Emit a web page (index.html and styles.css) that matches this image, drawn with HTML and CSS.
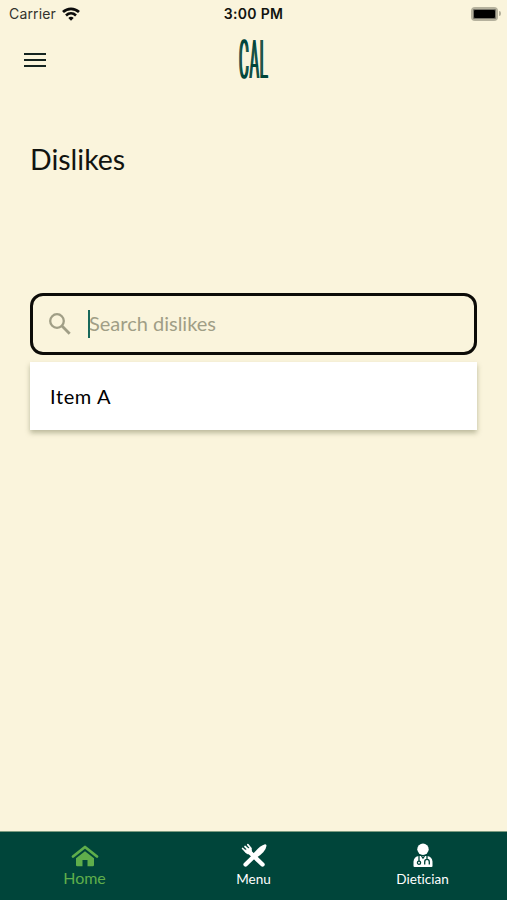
FILE: index.html
```html
<!DOCTYPE html>
<html lang="en">
<head>
    <meta charset="UTF-8">
    <meta name="viewport" content="width=device-width, initial-scale=1.0">
    <title>Dislikes</title>
    <link rel="stylesheet" href="styles.css">
</head>
<body>
    <div class="screen">
        <div class="status-bar">
            <div class="carrier">
                <span>Carrier</span>
                <svg class="wifi" viewBox="0 0 18 14" fill="none" stroke="#0c0c0c" stroke-width="2.7">
                    <path d="M1 5.1C5.5.8 12.5.8 17 5.1"/>
                    <path d="M4 8.4c2.9-2.6 7.1-2.6 10 0"/>
                    <path d="M9 13.7 6.3 10.9c1.5-1.4 3.9-1.4 5.4 0z" fill="#0c0c0c" stroke="none"/>
                </svg>
            </div>
            <span class="time">3:00 PM</span>
            <div class="battery">
                <span class="battery-body"></span>
                <span class="battery-tip"></span>
            </div>
        </div>

        <header class="header">
            <button class="menu-btn" aria-label="Open menu">
                <span></span>
                <span></span>
                <span></span>
            </button>
            <div class="logo"><span>CAL</span></div>
        </header>

        <main class="content">
            <h1>Dislikes</h1>

            <div class="search">
                <svg class="search-icon" viewBox="0 0 22 22" fill="none" stroke="#a09e86">
                    <circle cx="8" cy="8" r="6.8" stroke-width="2.3"/>
                    <path d="M13 13l7.7 7.7" stroke-width="2.8"/>
                </svg>
                <span class="caret"></span>
                <span class="placeholder">Search dislikes</span>
            </div>

            <ul class="results">
                <li>Item A</li>
            </ul>
        </main>

        <nav class="tab-bar">
            <a class="tab active">
                <svg width="28" height="22" viewBox="0 0 28 22">
                    <path d="M2 11.5 14 2l12 9.5" fill="none" stroke="#5fae4b" stroke-width="2.8" stroke-linecap="round" stroke-linejoin="round"/>
                    <path d="M14 6.2 23 13.3V20q0 1.2-1.2 1.2H16.5V15h-5v6.2H6.2Q5 21.2 5 20v-6.7z" fill="#5fae4b"/>
                </svg>
                <span>Home</span>
            </a>
            <a class="tab">
                <svg width="26" height="25" viewBox="0 0 26 25" fill="none" stroke="#fff" stroke-linecap="round">
                    <path d="M8.5 9 21.5 21.5" stroke-width="4.4"/>
                    <path d="M1.6 5.5 5.3 9.2M4 3.5 7.3 6.5M6.8 1.6 9.8 5.3" stroke-width="1.7"/>
                    <path d="M3.8 8Q5.5 12 9 10.8 11.5 8.5 9.8 4.8L7.7 5.8z" fill="#fff" stroke-width="1"/>
                    <path d="M11.5 11.5Q19 2.3 24 1.2q1.5-.2 1.5 1.6Q24.5 9.5 15 15z" fill="#fff" stroke="none"/>
                    <path d="M4.6 21.5 12.8 13.5" stroke-width="4.4"/>
                </svg>
                <span>Menu</span>
            </a>
            <a class="tab">
                <svg width="20" height="25" viewBox="0 0 20 25">
                    <circle cx="10" cy="6.2" r="5.7" fill="#fff"/>
                    <path d="M.5 23v-4.2Q.8 13.6 6 13h8q5.2.6 5.5 5.8V23q0 1-1 1h-17q-1 0-1-1z" fill="#fff"/>
                    <path d="M6 13v5.5M14 13v3M11.7 21.5v-2.6q0-2.5 2.3-2.5t2.3 2.5v2.6M8.5 13 10 15.2 11.5 13" fill="none" stroke="#00453a" stroke-width="1.3"/>
                    <circle cx="6" cy="19.7" r="1.6" fill="#fff" stroke="#00453a" stroke-width="1.3"/>
                </svg>
                <span>Dietician</span>
            </a>
        </nav>
    </div>
</body>
</html>
```
FILE: styles.css
```css
* {
    box-sizing: border-box;
    margin: 0;
    padding: 0;
}

body {
    background-color: #faf4dc;
    color: #11130f;
    font-family: 'Gill Sans', Lato, sans-serif;
    font-variant-ligatures: none;
}

.screen {
    display: flex;
    flex-direction: column;
    height: 900px;
    overflow: hidden;
}

.status-bar {
    display: grid;
    grid-template-columns: 1fr auto 1fr;
    align-items: center;
    height: 27px;
    padding: 0 6px 0 9px;
    font-family: Inter, sans-serif;
    font-size: 14px;
}

.carrier {
    display: flex;
    align-items: center;
    gap: 6px;
    color: #33322d;
    letter-spacing: 0.15px;
}

.wifi {
    width: 18px;
    height: 14px;
}

.time {
    margin-left: -3px;
    font-weight: 600;
    font-size: 14px;
    letter-spacing: 0.3px;
}

.battery {
    display: flex;
    align-items: center;
    justify-content: flex-end;
    gap: 1px;
}

.battery-body {
    width: 27px;
    height: 14px;
    background-color: #000;
    border: 2px solid #b5b19d;
    border-radius: 4px;
    box-shadow: inset 0 0 0 1px #77756a;
}

.battery-tip {
    width: 2px;
    height: 5px;
    background-color: #b5b19d;
    border-radius: 0 2px 2px 0;
}

.header {
    display: grid;
    grid-template-columns: 1fr auto 1fr;
    align-items: center;
    height: 66px;
    padding: 0 24px;
}

.menu-btn {
    display: flex;
    flex-direction: column;
    gap: 4px;
    width: 22px;
    background: none;
    border: none;
}

.menu-btn span {
    height: 2px;
    background-color: #14231f;
}

.logo {
    display: flex;
    justify-content: center;
    width: 30px;
    color: #00453a;
    font-family: Roboto, sans-serif;
    font-size: 54px;
    font-weight: 300;
    line-height: 66px;
}

.logo span {
    transform: scaleX(0.27);
    letter-spacing: 4px;
    text-shadow: 2px 0 currentColor, 4px 0 currentColor, -2px 0 currentColor;
}

.content {
    flex: 1;
    padding: 0 30px;
}

h1 {
    margin-top: 48px;
    font-size: 28.5px;
    font-weight: 400;
    line-height: 36px;
}

.search {
    display: flex;
    align-items: center;
    height: 62px;
    margin-top: 116px;
    padding: 0 15px;
    border: 3px solid #0c0b08;
    border-radius: 13px;
}

.search-icon {
    width: 22px;
    height: 22px;
    margin-left: 1px;
}

.caret {
    width: 2px;
    height: 28px;
    margin-left: 17px;
    background-color: #18685a;
}

.placeholder {
    margin: -3px 0 0 -1px;
    color: #a09e86;
    font-size: 20px;
}

.results {
    margin-top: 7px;
    background-color: #fff;
    box-shadow: 0 3px 5px rgba(70, 75, 35, 0.35);
    list-style: none;
}

.results li {
    height: 68px;
    padding: 0 20px;
    color: #000;
    font-size: 20px;
    letter-spacing: 0.6px;
    line-height: 69px;
}

.tab-bar {
    display: flex;
    height: 69px;
    background-color: #00453a;
    border-top: 1px solid #7d9c80;
}

.tab {
    display: flex;
    flex: 1;
    flex-direction: column;
    align-items: center;
    color: #fff;
    font-size: 13.5px;
    line-height: 18px;
}

.tab svg {
    margin-top: 11px;
}

.tab span {
    margin-top: 2px;
}

.tab.active {
    color: #5fae4b;
    font-size: 16px;
}

.tab.active svg {
    margin-top: 13px;
}
```
